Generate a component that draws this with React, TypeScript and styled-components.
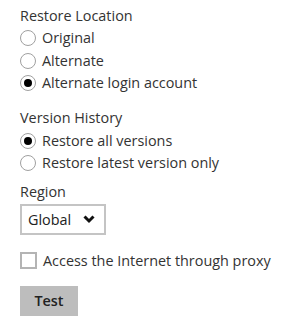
import * as React from "react";
import styled, { createGlobalStyle } from "styled-components";

const GlobalStyle = createGlobalStyle`
  html, body {
    margin: 0;
    padding: 0;
    background: #ffffff;
  }
  body {
    font-family: "Open Sans", "Noto Sans", sans-serif;
    font-size: 14.4px;
    color: #333333;
  }
`;

const Page = styled.div`
  width: 300px;
  height: 330px;
  padding: 6px 0 0 20px;
  box-sizing: border-box;
  display: flex;
  flex-direction: column;
`;

const Group = styled.div<{ $gap: number }>`
  display: flex;
  flex-direction: column;
  margin-bottom: ${({ $gap }) => $gap}px;
`;

const Label = styled.div<{ $space?: number }>`
  line-height: 20px;
  margin-bottom: ${({ $space }) => $space ?? 0}px;
`;

const Option = styled.label`
  display: flex;
  align-items: center;
  gap: 6px;
  height: 22.5px;
  line-height: 22px;
  cursor: pointer;
`;

const Radio = styled.span<{ $checked?: boolean }>`
  width: 16px;
  height: 16px;
  box-sizing: border-box;
  border-radius: 50%;
  border: 1.5px solid #a0a0a0;
  background: #ffffff;
  display: flex;
  align-items: center;
  justify-content: center;

  &::after {
    content: "";
    width: 8px;
    height: 8px;
    border-radius: 50%;
    background: ${({ $checked }) => ($checked ? "#000000" : "transparent")};
  }
`;

const Select = styled.div`
  margin-top: 2px;
  width: 86px;
  height: 31px;
  box-sizing: border-box;
  border: 2px solid #c4c4c4;
  display: flex;
  align-items: center;
  justify-content: space-between;
  padding: 0 9px 0 6px;
  color: #222222;
`;

const CheckRow = styled.label`
  display: flex;
  align-items: center;
  gap: 6px;
  height: 22px;
  margin-top: 15px;
`;

const Checkbox = styled.span`
  width: 17px;
  height: 17px;
  box-sizing: border-box;
  border: 2px solid #b4b4b4;
  background: #ffffff;
`;

const Button = styled.button`
  margin-top: 14px;
  width: 58px;
  height: 30px;
  border: none;
  background: #bdbdbd;
  font-family: "Open Sans", "Noto Sans", sans-serif;
  font-size: 14.4px;
  font-weight: 600;
  color: #222222;
  padding: 0;
`;

const Chevron = () => (
  <svg width="12" height="9" viewBox="0 0 12 9">
    <path d="M1.5 1.5 L6 6 L10.5 1.5" fill="none" stroke="#111" strokeWidth="3" />
  </svg>
);

const locations = [
  { label: "Original", checked: false },
  { label: "Alternate", checked: false },
  { label: "Alternate login account", checked: true },
];

const versions = [
  { label: "Restore all versions", checked: true },
  { label: "Restore latest version only", checked: false },
];

export default function App() {
  return (
    <>
      <GlobalStyle />
      <Page>
        <Group $gap={13}>
          <Label $space={1}>Restore Location</Label>
          {locations.map((o) => (
            <Option key={o.label}>
              <Radio $checked={o.checked} />
              {o.label}
            </Option>
          ))}
        </Group>
        <Group $gap={7}>
          <Label $space={2}>Version History</Label>
          {versions.map((o) => (
            <Option key={o.label}>
              <Radio $checked={o.checked} />
              {o.label}
            </Option>
          ))}
        </Group>
        <Label>Region</Label>
        <Select>
          <span>Global</span>
          <Chevron />
        </Select>
        <CheckRow>
          <Checkbox />
          Access the Internet through proxy
        </CheckRow>
        <div>
          <Button>Test</Button>
        </div>
      </Page>
    </>
  );
}
